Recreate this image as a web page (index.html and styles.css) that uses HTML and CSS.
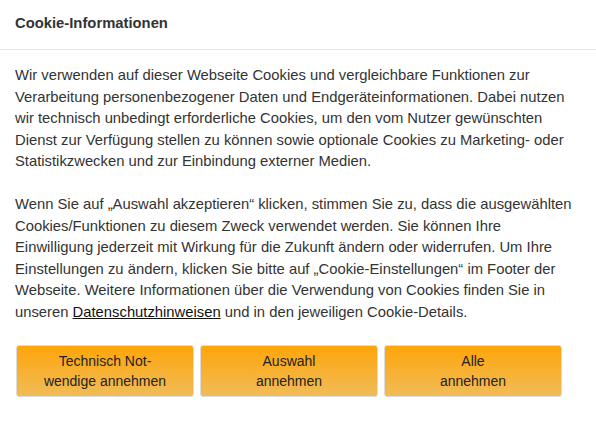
FILE: index.html
```html
<!DOCTYPE html>
<html lang="de">
<head>
<meta charset="utf-8">
<link rel="stylesheet" href="styles.css">
</head>
<body>
<div class="dialog">
  <div class="header"><h1 class="title">Cookie-Informationen</h1></div>
  <div class="content">
    <p class="para">Wir verwenden auf dieser Webseite Cookies und vergleichbare Funktionen zur Verarbeitung personenbezogener Daten und Endgeräteinformationen. Dabei nutzen wir technisch unbedingt erforderliche Cookies, um den vom Nutzer gewünschten Dienst zur Verfügung stellen zu können sowie optionale Cookies zu Marketing- oder Statistikzwecken und zur Einbindung externer Medien.</p>
    <p class="para">Wenn Sie auf „Auswahl akzeptieren“ klicken, stimmen Sie zu, dass die ausgewählten Cookies/Funktionen zu diesem Zweck verwendet werden. Sie können Ihre Einwilligung jederzeit mit Wirkung für die Zukunft ändern oder widerrufen. Um Ihre Einstellungen zu ändern, klicken Sie bitte auf „Cookie-Einstellungen“ im Footer der Webseite. Weitere Informationen über die Verwendung von Cookies finden Sie in unseren <a class="link" href="#">Datenschutzhinweisen</a> und in den jeweiligen Cookie-Details.</p>
    <div class="buttons">
      <button class="btn">Technisch Not-<br>wendige annehmen</button>
      <button class="btn">Auswahl<br>annehmen</button>
      <button class="btn">Alle<br>annehmen</button>
    </div>
  </div>
</div>
</body>
</html>
```
FILE: styles.css
```css
html, body {
  margin: 0;
  padding: 0;
  background: #fff;
}
body {
  font-family: "Liberation Sans", Arial, sans-serif;
  color: #333;
}
.dialog {
  width: 596px;
}
.header {
  height: 49px;
  border-bottom: 1px solid #e3e3e3;
  padding: 0 15px;
  display: flex;
  align-items: center;
}
.title {
  margin: 0;
  font-size: 14.8px;
  font-weight: bold;
  color: #333;
  position: relative;
  top: -2px;
}
.content {
  padding: 15px 15px 0 15px;
}
.para {
  margin: 0 0 21.5px 0;
  font-size: 14.8px;
  line-height: 21.55px;
}
.link {
  color: #111;
  text-decoration: underline;
}
.buttons {
  display: flex;
  gap: 6px;
  padding-left: 1px;
  margin-top: 10px;
}
.btn {
  width: 178px;
  height: 52px;
  margin: 0;
  padding: 0;
  border: 1px solid #dcdcdc;
  border-radius: 3px;
  background: linear-gradient(to bottom, #fea50a 0%, #f0bc58 100%);
  font-family: "Liberation Sans", Arial, sans-serif;
  font-size: 14px;
  line-height: 20px;
  color: #222;
  text-align: center;
}
```
